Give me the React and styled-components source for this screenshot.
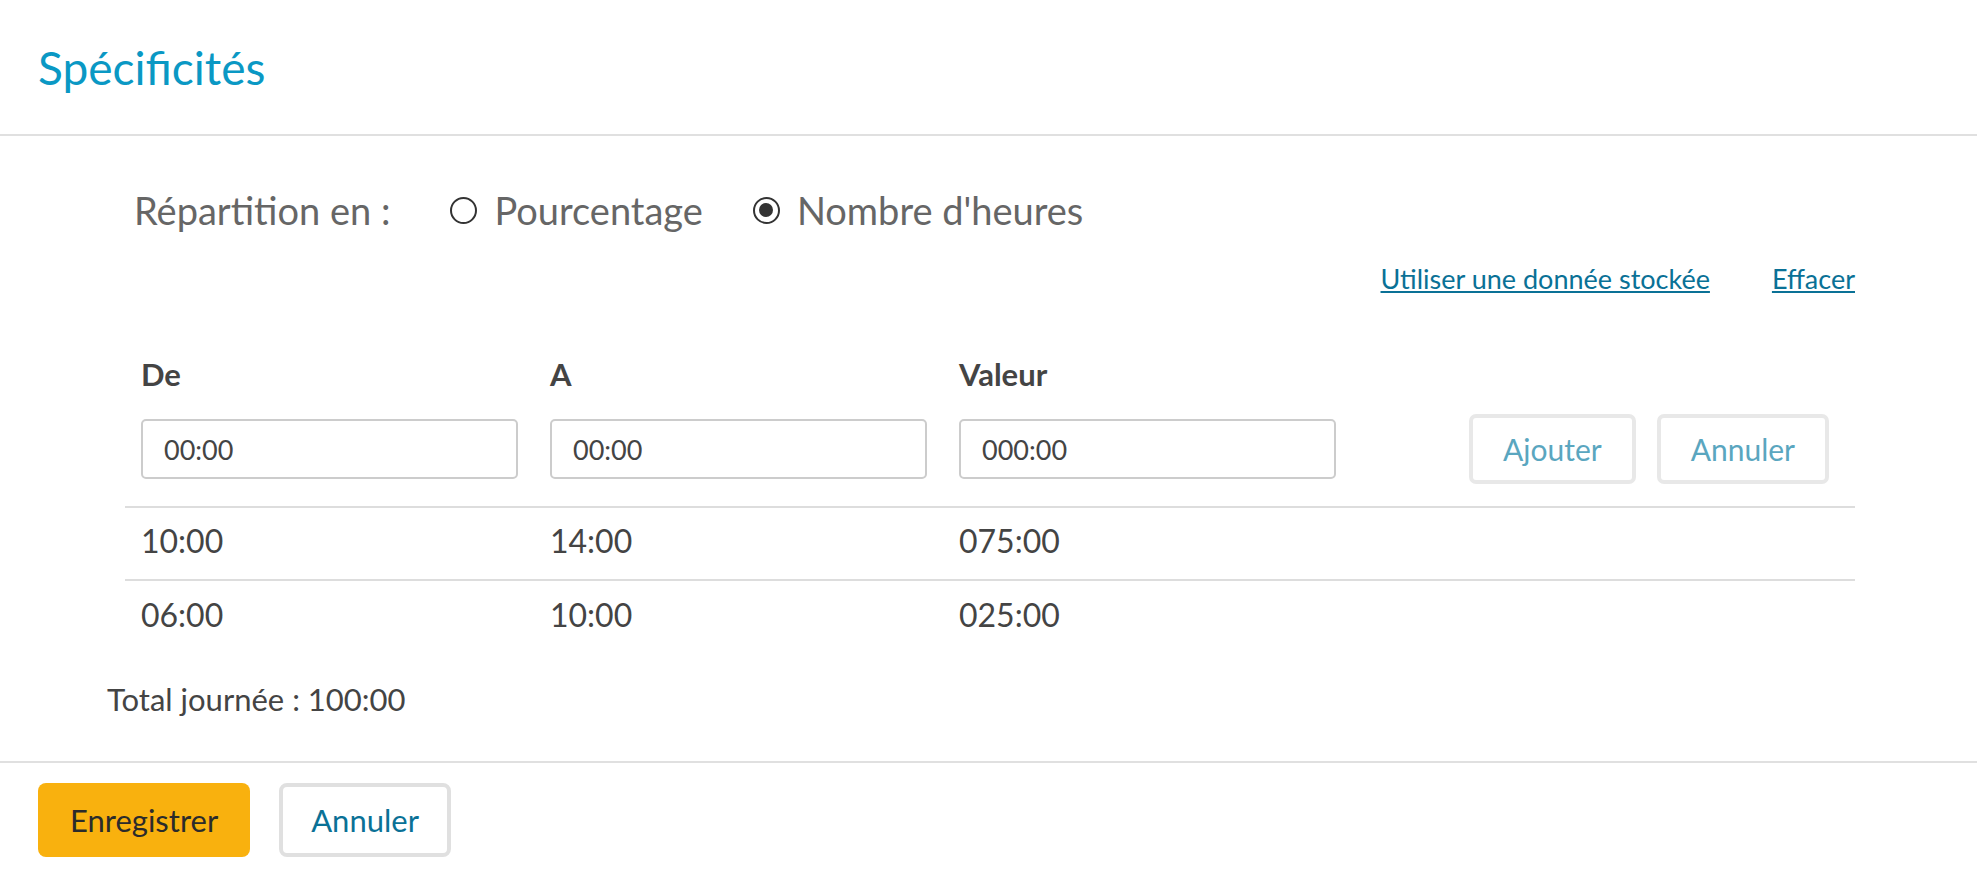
import React, { useState } from 'react';
import styled, { createGlobalStyle } from 'styled-components';

const Global = createGlobalStyle`
  body {
    margin: 0;
    background: #fff;
    font-family: Lato, "Liberation Sans", sans-serif;
    color: #444;
  }
`;

const Page = styled.div`
  width: 1977px;
  min-height: 877px;
  display: flex;
  flex-direction: column;
`;

const Header = styled.header`
  height: 134px;
  display: flex;
  align-items: center;
  padding-left: 38px;
  border-bottom: 2px solid #e0e0e0;
`;

const Title = styled.h1`
  margin: 0;
  font-weight: 400;
  font-size: 46px;
  color: #0a98c4;
`;

const Body = styled.section`
  padding: 0 122px 0 107px;
`;

const RadioRow = styled.div`
  display: flex;
  align-items: center;
  padding: 36px 0 0 27px;
  height: 76px;
  font-size: 38px;
  color: #666;
`;

const RadioLabel = styled.span`
  margin-right: 60px;
`;

const Radio = styled.label`
  display: flex;
  align-items: center;
  margin-right: 50px;
  gap: 17px;
  cursor: pointer;
`;

const Dot = styled.span`
  width: 27px;
  height: 27px;
  border-radius: 50%;
  border: 2px solid #333;
  box-sizing: border-box;
  display: flex;
  align-items: center;
  justify-content: center;

  &::after {
    content: '';
    width: 14px;
    height: 14px;
    border-radius: 50%;
    background: ${(p) => (p.checked ? '#333' : 'transparent')};
  }
`;

const Links = styled.div`
  display: flex;
  justify-content: flex-end;
  gap: 62px;
  margin-top: 14px;
`;

const Link = styled.a`
  font-size: 27px;
  color: #0a7196;
  text-decoration: underline;
  cursor: pointer;
`;

const Table = styled.div`
  margin: 60px 0 0 18px;
`;

const Grid = styled.div`
  display: grid;
  grid-template-columns: 409px 409px 1fr;
  align-items: center;
  padding-left: 16px;
`;

const HeadCell = styled.div`
  font-weight: 700;
  font-size: 31px;
  color: #444;
`;

const FormRow = styled(Grid)`
  grid-template-columns: 409px 409px 375px 1fr;
  padding: 21px 0 22px 16px;
  border-bottom: 2px solid #ddd;
`;

const Input = styled.input`
  width: 377px;
  height: 60px;
  box-sizing: border-box;
  border: 2px solid #ccc;
  border-radius: 5px;
  padding: 0 21px;
  font-family: Lato, "Liberation Sans", sans-serif;
  font-size: 27px;
  color: #444;
`;

const Actions = styled.div`
  display: flex;
  justify-content: flex-end;
  gap: 21px;
  padding-right: 26px;
`;

const SmallButton = styled.button`
  height: 70px;
  padding: 0 30px;
  background: #fff;
  border: 4px solid #e8e8e8;
  border-radius: 7px;
  font-family: Lato, "Liberation Sans", sans-serif;
  font-size: 30px;
  color: #5aa6bf;
  cursor: pointer;
`;

const DataRow = styled(Grid)`
  height: 73px;
  box-sizing: border-box;
  padding-bottom: 6px;
  font-size: 32px;
  border-bottom: ${(p) => (p.last ? 'none' : '2px solid #ddd')};
`;

const Total = styled.div`
  font-size: 31px;
  margin: 26px 0 43px;
`;

const Footer = styled.footer`
  border-top: 2px solid #e0e0e0;
  padding: 20px 38px;
  display: flex;
  gap: 29px;
`;

const FooterButton = styled.button`
  height: 74px;
  padding: 0 ${(p) => (p.primary ? '32px' : '28px')};
  border-radius: 8px;
  font-family: Lato, "Liberation Sans", sans-serif;
  font-size: 31px;
  cursor: pointer;
  background: ${(p) => (p.primary ? '#f9b10e' : '#fff')};
  border: ${(p) => (p.primary ? 'none' : '4px solid #e0e0e0')};
  color: ${(p) => (p.primary ? '#2b2b2b' : '#0a7196')};
`;

const rows = [
  { from: '10:00', to: '14:00', value: '075:00' },
  { from: '06:00', to: '10:00', value: '025:00' },
];

export default function App() {
  const [mode, setMode] = useState('heures');

  return (
    <Page>
      <Global />
      <Header>
        <Title>Spécificités</Title>
      </Header>
      <Body>
        <RadioRow>
          <RadioLabel>Répartition en :</RadioLabel>
          <Radio onClick={() => setMode('pct')}>
            <Dot checked={mode === 'pct'} />
            Pourcentage
          </Radio>
          <Radio onClick={() => setMode('heures')}>
            <Dot checked={mode === 'heures'} />
            Nombre d'heures
          </Radio>
        </RadioRow>
        <Links>
          <Link>Utiliser une donnée stockée</Link>
          <Link>Effacer</Link>
        </Links>
        <Table>
          <Grid>
            <HeadCell>De</HeadCell>
            <HeadCell>A</HeadCell>
            <HeadCell>Valeur</HeadCell>
          </Grid>
          <FormRow>
            <Input defaultValue="00:00" />
            <Input defaultValue="00:00" />
            <Input defaultValue="000:00" />
            <Actions>
              <SmallButton>Ajouter</SmallButton>
              <SmallButton>Annuler</SmallButton>
            </Actions>
          </FormRow>
          {rows.map((r, i) => (
            <DataRow key={i} last={i === rows.length - 1}>
              <div>{r.from}</div>
              <div>{r.to}</div>
              <div>{r.value}</div>
            </DataRow>
          ))}
        </Table>
        <Total>Total journée : 100:00</Total>
      </Body>
      <Footer>
        <FooterButton primary>Enregistrer</FooterButton>
        <FooterButton>Annuler</FooterButton>
      </Footer>
    </Page>
  );
}
